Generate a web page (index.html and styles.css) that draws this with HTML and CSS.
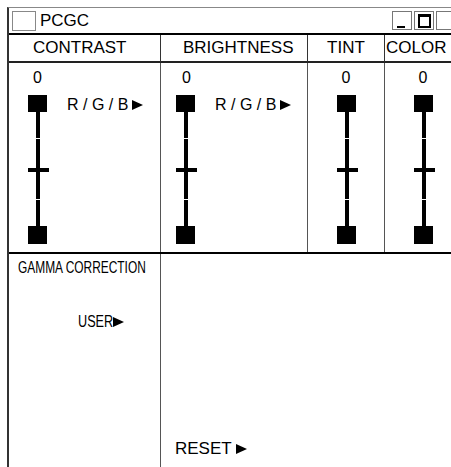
FILE: index.html
```html
<!DOCTYPE html>
<html>
<head>
<meta charset="utf-8">
<link rel="stylesheet" href="styles.css">
</head>
<body>
<div class="window">
  <div class="titlebar">
    <span class="sysbox"></span>
    <span class="title">PCGC</span>
    <div class="winbtns">
      <span class="wbtn"><span class="min"></span></span>
      <span class="wbtn"><span class="max"></span></span>
      <span class="wbtn"></span>
    </div>
  </div>
  <div class="grid">
    <div class="hd c1">CONTRAST</div>
    <div class="hd c2">BRIGHTNESS</div>
    <div class="hd c3">TINT</div>
    <div class="hd c4">COLOR</div>

    <div class="col c1">
      <div class="val">0</div>
      <div class="srow">
        <svg class="slider" width="21" height="149" viewBox="0 0 21 149" shape-rendering="crispEdges"><rect x="0" y="0" width="19" height="17"/><rect x="8" y="17" width="4" height="26"/><rect x="8" y="44" width="4" height="29"/><rect x="0" y="73" width="21" height="4"/><rect x="8" y="77" width="4" height="27"/><rect x="8" y="105" width="4" height="26"/><rect x="0" y="131" width="19" height="18"/></svg>
        <span class="rgb">R / G / B <i class="tri"></i></span>
      </div>
    </div>
    <div class="col c2">
      <div class="val">0</div>
      <div class="srow">
        <svg class="slider" width="21" height="149" viewBox="0 0 21 149" shape-rendering="crispEdges"><rect x="0" y="0" width="19" height="17"/><rect x="8" y="17" width="4" height="26"/><rect x="8" y="44" width="4" height="29"/><rect x="0" y="73" width="21" height="4"/><rect x="8" y="77" width="4" height="27"/><rect x="8" y="105" width="4" height="26"/><rect x="0" y="131" width="19" height="18"/></svg>
        <span class="rgb">R / G / B <i class="tri"></i></span>
      </div>
    </div>
    <div class="col c3">
      <div class="val">0</div>
      <div class="srow">
        <svg class="slider" width="21" height="149" viewBox="0 0 21 149" shape-rendering="crispEdges"><rect x="0" y="0" width="19" height="17"/><rect x="8" y="17" width="4" height="26"/><rect x="8" y="44" width="4" height="29"/><rect x="0" y="73" width="21" height="4"/><rect x="8" y="77" width="4" height="27"/><rect x="8" y="105" width="4" height="26"/><rect x="0" y="131" width="19" height="18"/></svg>
      </div>
    </div>
    <div class="col c4">
      <div class="val">0</div>
      <div class="srow">
        <svg class="slider" width="21" height="149" viewBox="0 0 21 149" shape-rendering="crispEdges"><rect x="0" y="0" width="19" height="17"/><rect x="8" y="17" width="4" height="26"/><rect x="8" y="44" width="4" height="29"/><rect x="0" y="73" width="21" height="4"/><rect x="8" y="77" width="4" height="27"/><rect x="8" y="105" width="4" height="26"/><rect x="0" y="131" width="19" height="18"/></svg>
      </div>
    </div>
  </div>
  <div class="lower">
    <div class="gamma">
      <div class="gtitle"><span class="cond gcond">GAMMA CORRECTION</span></div>
      <div class="user"><span class="cond ucond">USER</span><i class="tri"></i></div>
    </div>
    <div class="rightpane">
      <div class="reset">RESET <i class="tri"></i></div>
    </div>
  </div>
</div>
</body>
</html>
```

FILE: styles.css
```css
html, body {
  margin: 0;
  padding: 0;
  background: #fff;
  overflow: hidden;
}
body {
  font-family: "Liberation Sans", Arial, sans-serif;
  color: #000;
}
.window {
  margin: 7px 0 0 7px;
  width: 455px;
  height: 460px;
  border-top: 1px solid #888;
  border-left: 2px solid #333;
  box-sizing: border-box;
  overflow: hidden;
}
.titlebar {
  height: 27px;
  box-sizing: border-box;
  border-bottom: 2px solid #000;
  display: flex;
  align-items: center;
}
.sysbox {
  width: 24px;
  height: 20px;
  box-sizing: border-box;
  border: 1px solid #888;
  margin-left: 3px;
}
.title {
  font-size: 17px;
  margin-left: 4px;
  line-height: 20px;
}
.winbtns {
  margin-left: auto;
  margin-right: 6px;
  display: flex;
  gap: 2px;
}
.wbtn {
  width: 20px;
  height: 19px;
  box-sizing: border-box;
  border: 1px solid #777;
  display: flex;
  justify-content: center;
}
.min {
  width: 8px;
  height: 2px;
  background: #000;
  margin-top: 14px;
  margin-right: 2px;
}
.max {
  width: 13px;
  height: 14px;
  box-sizing: border-box;
  border: 2px solid #000;
  border-top-width: 3px;
  margin-top: 2px;
}
.grid {
  display: grid;
  grid-template-columns: 152px 147px 77px 77px;
  grid-template-rows: 28px 189px;
}
.hd {
  font-size: 17px;
  line-height: 26px;
  border-right: 1px solid #333;
  border-bottom: 2px solid #222;
  white-space: nowrap;
  overflow: hidden;
}
.hd.c1 { padding-left: 24px; }
.hd.c2 { padding-left: 22px; }
.hd.c3 { text-align: center; }
.hd.c4 { padding-left: 1px; }
.col {
  border-right: 1px solid #555;
  padding-top: 6px;
  box-sizing: border-box;
}
.val {
  font-size: 16px;
  line-height: 18px;
  height: 18px;
}
.c1 .val { padding-left: 24px; }
.c2 .val { padding-left: 21px; }
.c3 .val, .c4 .val { text-align: center; }
.srow {
  display: flex;
  align-items: flex-start;
  margin-top: 8px;
}
.c1 .srow { padding-left: 19px; }
.c2 .srow { padding-left: 15px; }
.c3 .srow { padding-left: 29px; }
.c4 .srow { padding-left: 29px; }
.slider {
  display: block;
  fill: #000;
}
.rgb {
  font-size: 16px;
  line-height: 18px;
  margin-left: 18px;
  margin-top: 1px;
  white-space: nowrap;
  display: flex;
  align-items: center;
}
.tri {
  display: inline-block;
  width: 0;
  height: 0;
  border-left: 11px solid #000;
  border-top: 5px solid transparent;
  border-bottom: 5px solid transparent;
}
.rgb .tri { margin-left: 4px; }
.lower {
  display: grid;
  grid-template-columns: 152px 1fr;
  border-top: 2px solid #000;
  height: 240px;
}
.gamma {
  border-right: 1px solid #555;
  padding-top: 5px;
  padding-left: 9px;
}
.gtitle, .user {
  font-size: 16px;
  line-height: 18px;
  white-space: nowrap;
}
.cond {
  display: inline-block;
  transform-origin: left center;
}
.gcond { transform: scaleX(0.745); }
.ucond {
  transform: scaleX(0.79);
  margin-right: -9px;
}
.user {
  display: flex;
  align-items: center;
  margin-top: 36px;
  padding-left: 60px;
}
.rightpane {
  padding-top: 186px;
  padding-left: 14px;
}
.reset {
  font-size: 17px;
  line-height: 18px;
  display: flex;
  align-items: center;
  white-space: pre;
}
```
